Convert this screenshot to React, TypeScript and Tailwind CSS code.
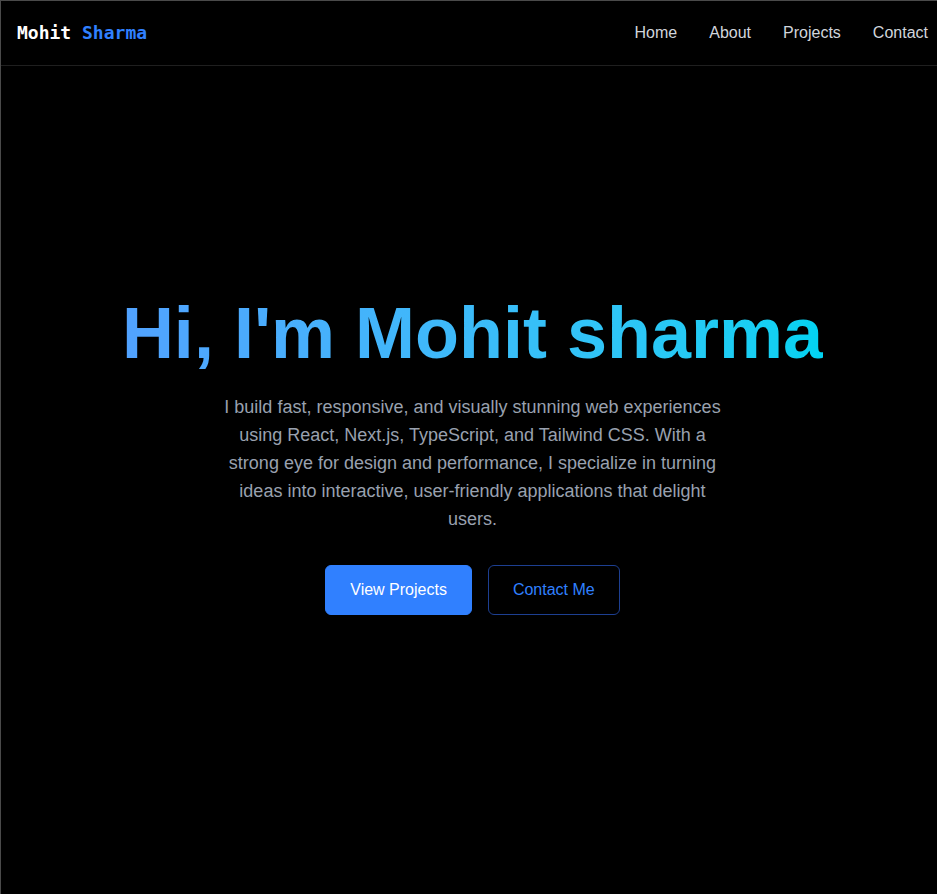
import React from "react";

const LINKS = ["Home", "About", "Projects", "Contact"];

function Nav() {
  return (
    <nav className="flex h-[65px] items-center justify-between border-b border-[#1f1f1f] pl-4 pr-4">
      <a className="font-['DejaVu_Sans_Mono',monospace] text-lg font-bold text-white">
        Mohit <span className="text-[#3080ff]">Sharma</span>
      </a>
      <ul className="flex gap-8 text-base text-[#d1d5dc]">
        {LINKS.map((link) => (
          <li key={link}>
            <a href="#">{link}</a>
          </li>
        ))}
      </ul>
    </nav>
  );
}

export default function App() {
  return (
    <div className="min-h-screen overflow-hidden bg-black font-['Liberation_Sans',Arial,sans-serif]">
      <main className="min-h-[894px] w-[944px] border-l border-t border-[#4a4a4a] bg-black text-white">
        <Nav />

        {/* HERO */}
        <section className="flex flex-col items-center px-6 pt-[231px] text-center">
          <h1 className="inline-block bg-gradient-to-r from-[#51a2ff] to-[#00d3f2] bg-clip-text text-7xl leading-none font-bold text-transparent">
            Hi, I'm Mohit sharma
          </h1>

          <p className="mt-6 max-w-lg text-lg leading-7 text-[#99a1af]">
            I build fast, responsive, and visually stunning web experiences
            using React, Next.js, TypeScript, and Tailwind CSS. With a strong
            eye for design and performance, I specialize in turning ideas into
            interactive, user-friendly applications that delight users.
          </p>

          <div className="mt-8 flex gap-4">
            <a className="rounded-md border border-[#3080ff] bg-[#3080ff] px-6 py-3 text-base leading-6 text-white">
              View Projects
            </a>
            <a className="rounded-md border border-[#1d3f91] px-6 py-3 text-base leading-6 text-[#3080ff]">
              Contact Me
            </a>
          </div>
        </section>
      </main>
    </div>
  );
}
